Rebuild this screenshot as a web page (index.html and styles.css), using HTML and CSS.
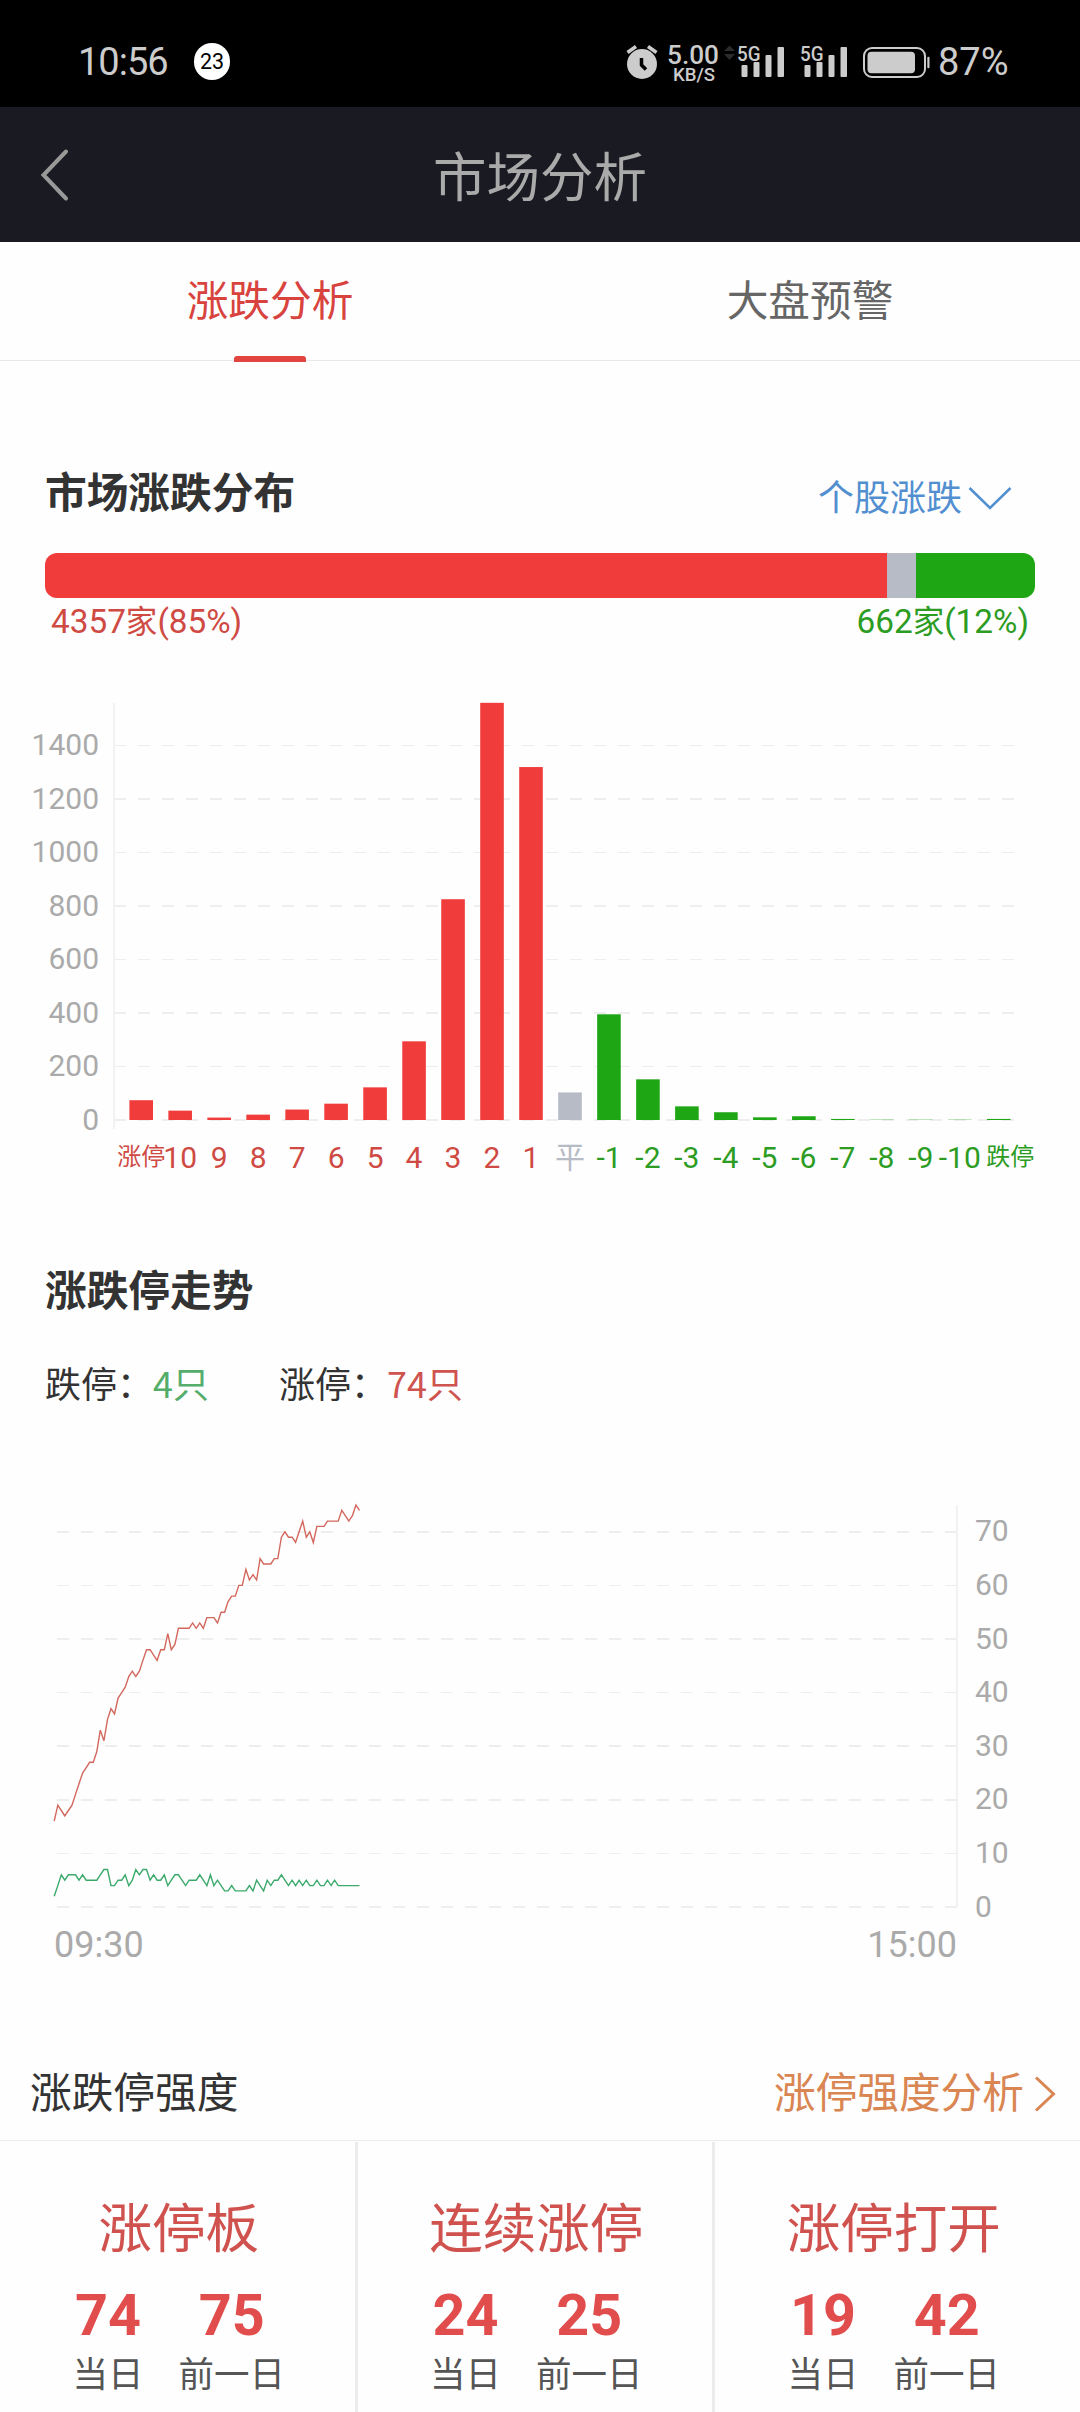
FILE: index.html
```html
<!DOCTYPE html>
<html lang="zh-CN">
<head>
  <meta charset="UTF-8">
  <meta name="viewport" content="width=device-width, initial-scale=1.0">
  <title>市场分析</title>
  <link rel="stylesheet" href="styles.css">
</head>
<body>
  <div class="status-bar">
    <span class="clock">10:56</span>
    <span class="notice-count">23</span>
    <svg class="status-icons" width="310" height="50" viewBox="0 0 310 50">
      <!-- alarm -->
      <circle cx="22" cy="26" r="15"/>
      <path class="line" d="M7.5 14.5 L16 8.500 M36.5 14.5 L28 8.500"/>
      <path class="hand" d="M21.5 20 V27 L26 31.500"/>
      <!-- network speed -->
      <text class="speed" x="47" y="25.5" textLength="52" lengthAdjust="spacingAndGlyphs">5.00</text>
      <text class="unit" x="53" y="42.500" textLength="42" lengthAdjust="spacingAndGlyphs">KB/S</text>
      <path class="dim" d="M104 13 L109.500 7.500 L115 13 Z M104 16 L109.500 22 L115 16 Z"/>
      <!-- signals -->
      <g id="signal">
        <text class="net" x="117" y="22.500" textLength="23.500" lengthAdjust="spacingAndGlyphs">5G</text>
        <rect x="121.500" y="27" width="6" height="12" rx="1"/>
        <rect x="133.500" y="24" width="6" height="15" rx="1"/>
        <rect x="145.500" y="17" width="6" height="22" rx="1"/>
        <rect x="157.500" y="9" width="6.500" height="30" rx="1"/>
      </g>
      <use href="#signal" x="63"/>
      <!-- battery -->
      <rect class="case" x="244" y="10" width="61" height="29" rx="8"/>
      <rect x="247.500" y="13.700" width="47.500" height="21.500" rx="4"/>
      <rect x="307.300" y="18.700" width="2.200" height="11.600" rx="1"/>
    </svg>
    <span class="battery-text">87%</span>
  </div>

  <header class="nav">
    <svg class="back" width="30" height="56" viewBox="0 0 30 56">
      <path d="M26 4.500 L3.500 28 L26 51.500"/>
    </svg>
    <h1>市场分析</h1>
  </header>

  <nav class="tabs">
    <a class="tab active">涨跌分析</a>
    <a class="tab">大盘预警</a>
  </nav>

  <section class="distribution">
    <div class="section-head">
      <h2>市场涨跌分布</h2>
      <a class="picker">个股涨跌
        <svg width="44" height="24" viewBox="0 0 44 24"><path d="M1.500 2 L22 22 L42.500 2"/></svg>
      </a>
    </div>
    <div class="ratio-bar">
      <div class="up" style="width: 842px"></div>
      <div class="flat" style="width: 29px"></div>
      <div class="down"></div>
    </div>
    <div class="ratio-text">
      <span class="up-text">4357<b>家</b>(85%)</span>
      <span class="down-text">662<b>家</b>(12%)</span>
    </div>
    <svg class="chart" id="bar-chart" width="1080" height="520" viewBox="0 0 1080 520"></svg>
  </section>

  <section class="trend">
    <h2>涨跌停走势</h2>
    <div class="legend">
      <span>跌停：<em class="limit-down">4只</em></span>
      <span>涨停：<em class="limit-up">74只</em></span>
    </div>
    <svg class="chart" id="line-chart" width="1080" height="500" viewBox="0 0 1080 500"></svg>
  </section>

  <section class="strength">
    <div class="strength-head">
      <span>涨跌停强度</span>
      <a>涨停强度分析
        <svg width="22" height="38" viewBox="0 0 22 38"><path d="M2 2.500 L19.500 19 L2 35.500"/></svg>
      </a>
    </div>
    <div class="columns">
      <div class="column">
        <h3>涨停板</h3>
        <div class="pair">
          <div><strong>74</strong><span>当日</span></div>
          <div><strong>75</strong><span>前一日</span></div>
        </div>
      </div>
      <div class="column">
        <h3>连续涨停</h3>
        <div class="pair">
          <div><strong>24</strong><span>当日</span></div>
          <div><strong>25</strong><span>前一日</span></div>
        </div>
      </div>
      <div class="column">
        <h3>涨停打开</h3>
        <div class="pair">
          <div><strong>19</strong><span>当日</span></div>
          <div><strong>42</strong><span>前一日</span></div>
        </div>
      </div>
    </div>
  </section>

  <script src="charts.js"></script>
</body>
</html>
```

FILE: styles.css
```css
:root {
  --red: #f03d3c;
  --green: #1fa614;
  --gray: #b7bbc6;
  --grid: #eeeeee;
  --axis-text: #aaaaaa;
  --cjk: "Noto Sans CJK SC", sans-serif;
}

* {
  margin: 0;
  padding: 0;
  box-sizing: border-box;
}

body {
  width: 1080px;
  height: 2412px;
  overflow: hidden;
  background: #fefefe;
  font-family: var(--cjk);
  color: #333;
}

svg {
  display: block;
  fill: none;
}

h1, h2, h3 {
  font-weight: 400;
}

/* status bar */
.status-bar {
  display: flex;
  align-items: center;
  height: 107px;
  padding: 17px 0 0 78px;
  background: #000;
  color: #ccc;
  font-family: Roboto, sans-serif;
  font-size: 38px;
}

.clock {
  width: 116px;
  letter-spacing: -1px;
}

.notice-count {
  width: 36px;
  height: 37px;
  margin-top: -2px;
  border-radius: 18px;
  background: #fff;
  color: #000;
  font-size: 21.5px;
  line-height: 37px;
  text-align: center;
}

.status-icons {
  margin-left: 390px;
  margin-top: 2px;
  fill: #ccc;
}

.status-icons .line {
  stroke: #ccc;
  stroke-width: 3.5;
}

.status-icons .hand {
  fill: none;
  stroke: #000;
  stroke-width: 3.5;
}

.status-icons .dim {
  fill: #2b2b2b;
}

.status-icons .speed {
  font-size: 25px;
  font-weight: 500;
}

.status-icons .unit {
  font-size: 18.5px;
  font-weight: 500;
}

.status-icons .net {
  font-size: 21px;
  font-weight: 500;
}

.status-icons .case {
  fill: none;
  stroke: #ccc;
  stroke-width: 2;
}

.battery-text {
  margin-left: 8px;
}

/* title bar */
.nav {
  display: grid;
  grid-template-columns: 120px 1fr 120px;
  align-items: center;
  height: 135px;
  background: #1a1a22;
}

.back {
  margin-left: 40px;
  stroke: #999;
  stroke-width: 4;
  stroke-linecap: round;
}

.nav h1 {
  padding-bottom: 1px;
  color: #aaa;
  font-size: 53.5px;
  line-height: 70px;
  text-align: center;
}

/* tabs */
.tabs {
  display: flex;
  height: 119px;
  border-bottom: 1px solid #ebe9e8;
}

.tab {
  position: relative;
  flex: 1;
  color: #666;
  font-size: 41.7px;
  line-height: 113px;
  text-align: center;
}

.tab.active {
  color: #d8433e;
}

.tab.active::after {
  content: "";
  position: absolute;
  left: 234px;
  bottom: -2px;
  width: 72px;
  height: 6px;
  border-radius: 3px 3px 0 0;
  background: #e2453f;
}

/* distribution */
.distribution {
  padding-top: 99px;
}

.section-head {
  display: flex;
  justify-content: space-between;
  height: 60px;
  padding: 0 68px 0 45px;
}

h2 {
  font-size: 41.7px;
  font-weight: 700;
  line-height: 60px;
}

.picker {
  display: flex;
  align-items: center;
  gap: 6px;
  height: 70px;
  color: #528fd0;
  font-size: 36px;
}

.picker svg {
  margin-top: 6px;
  stroke: #528fd0;
  stroke-width: 2.5;
}

.ratio-bar {
  display: flex;
  height: 45px;
  margin: 33px 45px 0;
  border-radius: 12px;
  overflow: hidden;
}

.ratio-bar .up {
  background: var(--red);
}

.ratio-bar .flat {
  background: var(--gray);
}

.ratio-bar .down {
  flex: 1;
  background: var(--green);
}

.ratio-text {
  display: flex;
  justify-content: space-between;
  height: 47px;
  padding: 0 51px;
  font-family: Roboto, var(--cjk);
  font-size: 33.3px;
  line-height: 47px;
}

.ratio-text b {
  font-weight: 400;
  font-size: 31.5px;
}

.up-text {
  color: #cf4a43;
}

.down-text {
  color: #2c9c23;
}

/* charts */
.chart {
  font-family: Roboto, var(--cjk);
  font-size: 30px;
}

#bar-chart {
  margin-top: 35px;
}

.chart .grid {
  stroke: var(--grid);
  stroke-dasharray: 12 12;
}

.chart .axis {
  stroke: #f2f2f2;
  stroke-width: 2;
}

.chart .tick {
  fill: var(--axis-text);
}

.chart .time {
  fill: var(--axis-text);
  font-size: 36px;
}

.chart .limit {
  font-size: 24px;
}

.bar-up { fill: var(--red); }
.bar-flat { fill: var(--gray); }
.bar-down { fill: var(--green); }
.name-up { fill: #cf4a43; }
.name-flat { fill: var(--gray); }
.name-down { fill: #2c9c23; }

.series {
  stroke-width: 1.4;
}

.series-up { stroke: #d2675d; }
.series-down { stroke: #3aa96b; }

/* trend */
.trend {
  padding-top: 58px;
}

.trend h2 {
  padding-left: 45px;
}

.legend {
  display: flex;
  gap: 70px;
  height: 60px;
  margin: 34px 0 68px;
  padding-left: 45px;
  font-size: 36px;
  line-height: 60px;
}

.legend em {
  font-style: normal;
}

.limit-down {
  color: #55ad6c;
}

.limit-up {
  color: #cf5450;
}

/* strength */
.strength {
  padding-top: 60px;
}

.strength-head {
  display: flex;
  justify-content: space-between;
  align-items: center;
  height: 101px;
  padding: 0 24px 0 30px;
  border-bottom: 1px solid #ebebeb;
  font-size: 41.7px;
}

.strength-head a {
  display: flex;
  align-items: center;
  gap: 10px;
  color: #d98653;
}

.strength-head svg {
  margin-top: 7px;
  stroke: #d98653;
  stroke-width: 3;
}

.columns {
  display: flex;
  height: 271px;
  padding-top: 1px;
}

.column {
  width: 357.5px;
  padding-top: 48px;
  border-left: 3px solid transparent;
  border-right: 3px solid #ececec;
}

.column:last-child {
  border-right-color: transparent;
}

.column h3 {
  color: #d0524e;
  font-size: 53.5px;
  line-height: 70px;
  text-align: center;
}

.pair {
  display: flex;
  justify-content: center;
  gap: 35px;
  margin-top: 26px;
  text-align: center;
}

.pair strong {
  display: block;
  color: #e14d4c;
  font-family: Roboto, sans-serif;
  font-size: 57.5px;
  font-weight: 700;
  line-height: 60px;
}

.pair span {
  display: block;
  color: #555;
  font-size: 35.5px;
  line-height: 52px;
}
```

FILE: charts.js
```javascript
const NS = 'http://www.w3.org/2000/svg';

function draw(parent, tag, attrs, text) {
  const el = document.createElementNS(NS, tag);
  for (const key in attrs) el.setAttribute(key, attrs[key]);
  if (text !== undefined) el.textContent = text;
  parent.appendChild(el);
  return el;
}

// number of stocks per price change step
const steps = [
  ['涨停', 74], ['10', 35], ['9', 9], ['8', 20], ['7', 39], ['6', 61],
  ['5', 122], ['4', 294], ['3', 825], ['2', 1559], ['1', 1319], ['平', 103],
  ['-1', 395], ['-2', 152], ['-3', 51], ['-4', 29], ['-5', 10], ['-6', 14],
  ['-7', 4], ['-8', 1], ['-9', 1], ['-10', 1], ['跌停', 4]
];

function drawBars() {
  const svg = document.getElementById('bar-chart');
  const base = 440;
  const scale = 0.2676;

  for (let v = 0; v <= 1400; v += 200) {
    const thick = v % 400 === 0;
    const y = thick ? Math.round(base - v * scale) : Math.floor(base - v * scale) + 0.5;
    draw(svg, 'line', { class: 'grid', x1: 114, x2: 1014, y1: y, y2: y, 'stroke-width': thick ? 2 : 1 });
    draw(svg, 'text', { class: 'tick', x: 99, y: base - v * scale + 9.7, 'text-anchor': 'end' }, v);
  }
  draw(svg, 'line', { class: 'axis', x1: 114, x2: 114, y1: 23, y2: 449 });

  steps.forEach(([name, count], i) => {
    const kind = i < 11 ? 'up' : i === 11 ? 'flat' : 'down';
    const cx = 141.2 + i * 38.98;
    const h = count * scale;
    draw(svg, 'rect', { class: 'bar-' + kind, x: cx - 11.8, y: base - h, width: 23.6, height: h });
    const limit = name.endsWith('停');
    const shift = name === '跌停' ? 11.5 : 0;
    draw(svg, 'text', {
      class: 'name-' + kind + (limit ? ' limit' : ''),
      x: cx + shift, y: limit ? 485 : 488, 'text-anchor': 'middle'
    }, name);
  });
}

// minute values since 09:30
const limitUp = [
  16, 19, 18, 17, 18, 19, 21, 23, 25, 26, 27, 27, 29, 33, 31, 35, 37, 36, 39, 40,
  41, 43, 44, 43, 44, 46, 48, 48, 47, 46, 48, 48, 51, 48, 49, 52, 52, 52, 52, 53,
  52, 53, 52, 54, 54, 54, 53, 55, 55, 57, 58, 58, 60, 60, 63, 61, 62, 61, 65, 64,
  64, 64, 65, 65, 69, 70, 69, 69, 68, 70, 72, 69, 70, 68, 71, 71, 71, 72, 72, 72,
  72, 74, 73, 72, 73, 75, 74
];
const limitDown = [
  2, 4, 6, 5, 6, 6, 6, 5, 6, 5, 5, 5, 5, 6, 7, 7, 4, 4, 5, 5,
  6, 4, 5, 7, 6, 7, 7, 5, 6, 5, 5, 6, 4, 5, 6, 6, 5, 4, 5, 5,
  5, 6, 5, 4, 6, 4, 5, 4, 3, 3, 4, 3, 3, 3, 3, 4, 3, 5, 4, 3,
  5, 4, 5, 5, 6, 5, 4, 5, 4, 5, 4, 5, 4, 4, 5, 4, 4, 5, 4, 5,
  4, 4, 4, 4, 4, 4, 4
];

function drawLines() {
  const svg = document.getElementById('line-chart');
  const base = 427;
  const scale = 5.36;

  for (let v = 0; v <= 70; v += 10) {
    const thick = ![10, 40, 60].includes(v);
    const y = thick ? Math.round(base - v * scale) : Math.floor(base - v * scale) + 0.5;
    draw(svg, 'line', { class: 'grid', x1: 57, x2: 957, y1: y, y2: y, 'stroke-width': thick ? 2 : 1 });
    draw(svg, 'text', { class: 'tick', x: 975, y: base - v * scale + 9.5 }, v);
  }
  draw(svg, 'line', { class: 'axis', x1: 957, x2: 957, y1: 25, y2: 427 });

  const points = data => data.map((v, i) => (54.2 + i * 3.55).toFixed(1) + ',' + (base - v * scale).toFixed(1)).join(' ');
  draw(svg, 'polyline', { class: 'series series-up', points: points(limitUp) });
  draw(svg, 'polyline', { class: 'series series-down', points: points(limitDown) });

  draw(svg, 'text', { class: 'time', x: 54, y: 476.5 }, '09:30');
  draw(svg, 'text', { class: 'time', x: 957, y: 476.5, 'text-anchor': 'end' }, '15:00');
}

drawBars();
drawLines();
```
